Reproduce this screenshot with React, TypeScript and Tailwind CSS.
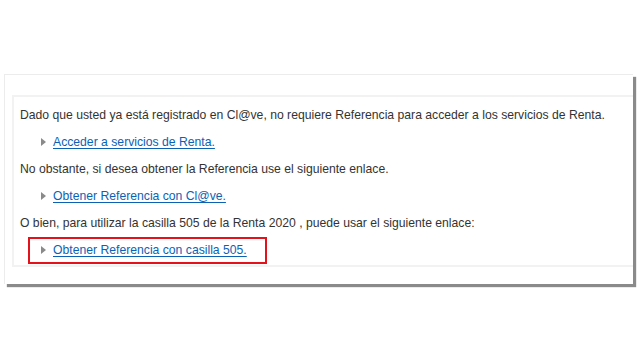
import React from "react";

function Arrow() {
  return (
    <svg width="5" height="8" viewBox="0 0 5 8" className="shrink-0">
      <path d="M0 0 L5 4 L0 8 Z" fill="#8a8a8a" />
    </svg>
  );
}

function LinkRow({ text, boxed }: { text: string; boxed?: boolean }) {
  const inner = (
    <div className="flex items-center gap-[7px]">
      <Arrow />
      <a href="#" className="text-[#0b62b5] underline underline-offset-[2px]">
        {text}
      </a>
    </div>
  );
  return (
    <div className="h-[27px] flex items-center pl-[21px]">
      {boxed ? (
        <div className="-ml-[13px] pl-[11px] pr-[18px] h-[27px] flex items-center border-2 border-[#e4121a]">
          {inner}
        </div>
      ) : (
        inner
      )}
    </div>
  );
}

export default function App() {
  return (
    <div className="w-[640px] h-[360px] bg-white pt-[74px] pl-[4px]" style={{ fontFamily: '"Liberation Sans", Arial, sans-serif' }}>
      <div className="w-[629px] h-[210px] bg-white border-l border-t border-[#ececec] shadow-[3px_3px_1px_#8a8a8a] pt-[20px] pl-[7px]">
        <div className="border-t-2 border-l-2 border-b-2 border-[#f2f2f2] pl-[6px] pt-[5px] h-[172px] text-[12.2px] text-[#333] leading-none whitespace-nowrap">
          <div className="h-[27px] flex items-center">Dado que usted ya está registrado en Cl@ve, no requiere Referencia para acceder a los servicios de Renta.</div>
          <LinkRow text="Acceder a servicios de Renta." />
          <div className="h-[27px] flex items-center">No obstante, si desea obtener la Referencia use el siguiente enlace.</div>
          <LinkRow text="Obtener Referencia con Cl@ve." />
          <div className="h-[27px] flex items-center">O bien, para utilizar la casilla 505 de la Renta 2020 , puede usar el siguiente enlace:</div>
          <LinkRow text="Obtener Referencia con casilla 505." boxed />
        </div>
      </div>
    </div>
  );
}
